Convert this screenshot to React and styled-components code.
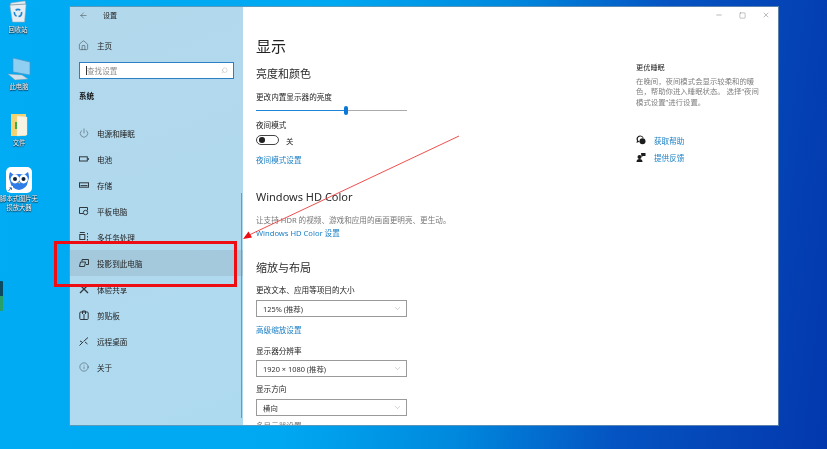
import React from 'react';
import styled, { createGlobalStyle } from 'styled-components';
import { ArrowLeft, ChevronDown, House, Info, Minus, Power, Search, Square, X } from 'lucide-react';

const GlobalStyle = createGlobalStyle`
  html, body { margin: 0; padding: 0; background: #0078d7; }
  body { font-family: "Noto Sans", "Noto Sans CJK SC", sans-serif; }
`;

const Desktop = styled.div`
  position: relative;
  width: 827px;
  height: 449px;
  overflow: hidden;
  background: linear-gradient(97deg, #00acf4 0%, #00a8f1 38%, #0088dd 58%, #0553c2 76%, #0338ad 100%);
`;

const DesktopIcon = styled.div`
  position: absolute;
  left: ${p => p.$x}px;
  top: ${p => p.$y}px;
  width: 38px;
  display: flex;
  flex-direction: column;
  align-items: center;
  filter: blur(0.3px);
`;

const DesktopLabel = styled.span`
  margin-top: ${p => p.$gap}px;
  width: 38px;
  text-align: center;
  font-size: 6.3px;
  line-height: 8.5px;
  color: #fff;
  text-shadow: 0 0 1px #123, 0 1px 1px #123;
`;

const EdgeWidget = styled.div`
  position: absolute;
  left: 0;
  top: 281px;
  width: 3px;
  height: 30px;
  border-radius: 0 1px 1px 0;
  background: linear-gradient(#0b4a63 0 50%, #27a06a 50% 100%);
`;

const Window = styled.div`
  position: absolute;
  left: 70px;
  top: 7px;
  width: 708px;
  height: 418px;
  box-sizing: border-box;
  display: flex;
  background: #fff;
  box-shadow: 0 0 0 1px rgba(120, 150, 170, 0.75);
  overflow: hidden;
  filter: blur(0.3px);
`;

const Sidebar = styled.aside`
  position: relative;
  width: 173px;
  flex: none;
  background: linear-gradient(160deg, #b3d8ec, #aedaf0);
  color: #222;
`;

const TitleRow = styled.div`
  height: 16px;
  display: flex;
  align-items: center;
  padding-left: 9px;
  gap: 15px;
  font-size: 7px;
`;

const HomeRow = styled.div`
  margin-top: 15px;
  height: 15px;
  display: flex;
  align-items: center;
  gap: 8px;
  padding-left: 8px;
  font-size: 7.6px;
`;

const SearchBox = styled.div`
  margin: 9px 0 0 9px;
  width: 155px;
  height: 17px;
  box-sizing: border-box;
  display: flex;
  align-items: center;
  padding: 0 5px 0 6px;
  background: #fff;
  border: 1px solid #2c7fc4;
  color: #8f8f8f;
  font-size: 7.6px;
`;

const Caret = styled.span`
  width: 1px;
  height: 9px;
  margin-right: 0;
  background: #333;
`;

const SearchText = styled.span`
  flex: 1;
`;

const SidebarHeading = styled.div`
  margin: 12px 0 0 9px;
  height: 10px;
  line-height: 10px;
  font-size: 7.5px;
  font-weight: 700;
  color: #111;
`;

const NavList = styled.nav`
  margin-top: 19px;
  display: flex;
  flex-direction: column;
`;

const NavRow = styled.div`
  height: 26px;
  display: flex;
  align-items: center;
  gap: 8px;
  padding-left: 9px;
  font-size: 7.6px;
  background: ${p => (p.$active ? '#a4c9dc' : 'transparent')};
`;

const NavIcon = styled.svg`
  width: 10px;
  height: 10px;
  flex: none;
  fill: none;
  stroke: #2f383d;
  stroke-width: 1;
`;

const SideScroll = styled.div`
  position: absolute;
  right: 1px;
  top: 186px;
  width: 1.5px;
  height: 225px;
  background: #7f97a5;
`;

const Main = styled.main`
  flex: 1;
  min-width: 0;
  display: flex;
  flex-direction: column;
`;

const Controls = styled.div`
  height: 16px;
  flex: none;
  display: flex;
  justify-content: flex-end;
  align-items: center;
  gap: 16px;
  padding-right: 8px;
  color: #333;
`;

const Columns = styled.div`
  flex: 1;
  min-height: 0;
  display: flex;
`;

const Content = styled.section`
  width: 393px;
  flex: none;
  box-sizing: border-box;
  padding: 13px 0 0 13px;
  color: #222;
`;

const PageTitle = styled.h1`
  margin: 0;
  height: 20px;
  line-height: 20px;
  font-size: 15px;
  font-weight: 400;
  color: #222;
`;

const SectionTitle = styled.h2`
  margin: ${p => p.$top}px 0 0;
  height: 14px;
  line-height: 14px;
  font-size: 11px;
  font-weight: 400;
  color: #2b2b2b;
`;

const Label = styled.div`
  margin-top: ${p => p.$top}px;
  height: 10px;
  line-height: 10px;
  font-size: 7.6px;
  white-space: nowrap;
  color: ${p => (p.$muted ? '#777' : '#222')};
`;

const LinkText = styled(Label)`
  color: #1a7fc4;
`;

const Slider = styled.div`
  margin-top: 4px;
  position: relative;
  width: 151px;
  height: 9px;
  display: flex;
  align-items: center;
  &::before {
    content: '';
    width: 100%;
    height: 1.5px;
    background: linear-gradient(to right, #1e84d8 60%, #ababab 60%);
  }
`;

const SliderThumb = styled.span`
  position: absolute;
  left: 88px;
  top: 0;
  width: 4px;
  height: 9px;
  border-radius: 2px;
  background: #0a78d6;
`;

const ToggleRow = styled.div`
  margin-top: 5px;
  height: 10px;
  display: flex;
  align-items: center;
  gap: 7px;
  font-size: 7.4px;
`;

const Toggle = styled.span`
  width: 23px;
  height: 10px;
  box-sizing: border-box;
  border: 1.2px solid #444;
  border-radius: 5px;
  display: flex;
  align-items: center;
  padding-left: 2px;
  &::before {
    content: '';
    width: 5.5px;
    height: 5.5px;
    border-radius: 50%;
    background: #222;
  }
`;

const Select = styled.div`
  margin-top: ${p => p.$top}px;
  width: 151px;
  height: 17px;
  box-sizing: border-box;
  display: flex;
  align-items: center;
  justify-content: space-between;
  padding: 0 4px 0 6px;
  border: 1.2px solid #9a9a9a;
  font-size: 7.4px;
  color: #333;
`;

const Aside = styled.aside`
  flex: 1;
  padding-top: 39px;
`;

const AsideTitle = styled.div`
  height: 10px;
  line-height: 10px;
  font-size: 7.2px;
  color: #222;
`;

const AsideText = styled.p`
  margin: 4px 0 28px;
  font-size: 7.4px;
  line-height: 10.4px;
  color: #808080;
  white-space: nowrap;
`;

const HelpRow = styled.div`
  margin-top: ${p => p.$top}px;
  height: 10px;
  display: flex;
  align-items: center;
  gap: 8px;
  font-size: 7.6px;
  color: #1a7fc4;
`;

const HelpIcon = styled.svg`
  width: 10px;
  height: 10px;
  flex: none;
  fill: #1c1c1c;
`;

const Highlight = styled.div`
  position: absolute;
  left: 54px;
  top: 241px;
  width: 183px;
  height: 46px;
  box-sizing: border-box;
  border: 3px solid #ee0d12;
`;

const Arrow = styled.svg`
  position: absolute;
  left: 0;
  top: 0;
  pointer-events: none;
`;

const navItems = [
  ['电源和睡眠', <Power key="i" size={10} strokeWidth={1.1} color="#2f383d" />],
  ['电池', <NavIcon key="i" viewBox="0 0 10 10"><rect x="0.5" y="2.8" width="7.8" height="4.2" /><path d="M9.3 4v2" /></NavIcon>],
  ['存储', <NavIcon key="i" viewBox="0 0 10 10"><rect x="0.5" y="2.8" width="9" height="4.4" /><path d="M1.5 5.600h7" /></NavIcon>],
  ['平板电脑', <NavIcon key="i" viewBox="0 0 10 10"><path d="M4 7.500H.5v-6h8v3" /><circle cx="6.500" cy="6.500" r="2.200" /></NavIcon>],
  ['多任务处理', <NavIcon key="i" viewBox="0 0 10 10"><path d="M.8.5h5M.8 9.500h5" /><rect x=".8" y="2.500" width="5" height="5" /><path d="M8.500 1v1.500M8.500 4v1.500M8.500 7v1.500" /></NavIcon>],
  ['投影到此电脑', <NavIcon key="i" viewBox="0 0 10 10"><path d="M3 3.500V1.500h6.500v5H7" /><path d="M.5 8.500l1-4.500h5l-1 4.500z" /></NavIcon>, true],
  ['体验共享', <NavIcon key="i" viewBox="0 0 10 10"><path d="M1 1l8 8M9 1L1 9" strokeWidth="1.3" /></NavIcon>],
  ['剪贴板', <NavIcon key="i" viewBox="0 0 10 10"><rect x=".8" y="2" width="8.400" height="7.500" rx="1" /><path d="M3.500 4V1h3v3M5 4v5.500" /></NavIcon>],
  ['远程桌面', <NavIcon key="i" viewBox="0 0 10 10"><path d="M.5 9.500l4-4M5 5l4-3.500M6 6l2.500 2M1 5l2 1" /></NavIcon>],
  ['关于', <Info key="i" size={10} strokeWidth={1.1} color="#2f383d" />],
];

const RecycleBin = () => (
  <svg width="22" height="23" viewBox="0 0 22 23">
    <path d="M4 3l14-2 1 4-1.500 17H5.500L3 6z" fill="#e6eef3" stroke="#9fb2bd" strokeWidth=".6" />
    <path d="M3 5l16-1" stroke="#8ea3ae" />
    <circle cx="11" cy="13" r="3.600" fill="none" stroke="#1d87d6" strokeWidth="1.6" strokeDasharray="5 2" />
  </svg>
);

const ThisPc = () => (
  <svg width="24" height="24" viewBox="0 0 24 24">
    <path d="M6 1l17 4v13l-17-3z" fill="#8fd0f2" stroke="#4c96c6" strokeWidth=".7" />
    <path d="M1 17l14 1 6 4-13 1z" fill="#cfe0ea" stroke="#7d95a5" strokeWidth=".4" />
  </svg>
);

const Folder = () => (
  <svg width="18" height="24" viewBox="0 0 18 24">
    <path d="M1 1h15v22H1z" fill="#f2d36f" />
    <path d="M7 3l10 1v18l-10 1z" fill="#f7f4e4" stroke="#ddd" strokeWidth=".4" />
    <rect x="5" y="9" width="2" height="7" fill="#3dac4c" />
  </svg>
);

const OwlApp = () => (
  <svg width="26" height="26" viewBox="0 0 26 26">
    <rect width="26" height="26" rx="5" fill="#fff" />
    <path d="M4 5l4 3q5-2 10 0l4-3q2 5 0 9q-1 8-9 9q-8-1-9-9q-2-4 0-9z" fill="#2f7de8" />
    <circle cx="9" cy="12" r="4.400" fill="#fff" />
    <circle cx="17.500" cy="12" r="4.400" fill="#fff" />
    <circle cx="9" cy="12" r="2" fill="#10213a" />
    <circle cx="17.500" cy="12" r="2" fill="#10213a" />
    <path d="M12 15l1.300 2 1.300-2z" fill="#f2b93b" />
    <rect x="1" y="19" width="6" height="6" fill="#fff" />
    <path d="M2.500 24l2.500-3M3.500 20.800h2v2" stroke="#1c5fae" strokeWidth=".9" fill="none" />
  </svg>
);

const App = () => (
  <Desktop>
    <GlobalStyle />
    <DesktopIcon $x={-1} $y={0}>
      <RecycleBin />
      <DesktopLabel $gap={3}>回收站</DesktopLabel>
    </DesktopIcon>
    <DesktopIcon $x={0} $y={57}>
      <ThisPc />
      <DesktopLabel $gap={2}>此电脑</DesktopLabel>
    </DesktopIcon>
    <DesktopIcon $x={0} $y={113}>
      <Folder />
      <DesktopLabel $gap={2}>文件</DesktopLabel>
    </DesktopIcon>
    <DesktopIcon $x={0} $y={167}>
      <OwlApp />
      <DesktopLabel $gap={2}>脚本式图片无损放大器</DesktopLabel>
    </DesktopIcon>
    <EdgeWidget />

    <Window>
      <Sidebar>
        <TitleRow>
          <ArrowLeft size={9} strokeWidth={1.2} color="#333" />
          <span>设置</span>
        </TitleRow>
        <HomeRow>
          <House size={11} strokeWidth={1.1} color="#2f383d" />
          主页
        </HomeRow>
        <SearchBox>
          <Caret />
          <SearchText>查找设置</SearchText>
          <Search size={7} strokeWidth={1.2} color="#999" style={{ transform: 'scaleX(-1)' }} />
        </SearchBox>
        <SidebarHeading>系统</SidebarHeading>
        <NavList>
          {navItems.map(([name, icon, active]) => (
            <NavRow key={name} $active={active}>
              {icon}
              {name}
            </NavRow>
          ))}
        </NavList>
        <SideScroll />
      </Sidebar>

      <Main>
        <Controls>
          <Minus size={8} strokeWidth={1} />
          <Square size={7} strokeWidth={1} />
          <X size={8} strokeWidth={1} />
        </Controls>
        <Columns>
          <Content>
            <PageTitle>显示</PageTitle>
            <SectionTitle $top={11}>亮度和颜色</SectionTitle>
            <Label $top={11}>更改内置显示器的亮度</Label>
            <Slider><SliderThumb /></Slider>
            <Label $top={5}>夜间模式</Label>
            <ToggleRow><Toggle />关</ToggleRow>
            <LinkText $top={10}>夜间模式设置</LinkText>
            <SectionTitle $top={25}>Windows HD Color</SectionTitle>
            <Label $top={11} $muted>让支持 HDR 的视频、游戏和应用的画面更明亮、更生动。</Label>
            <LinkText $top={3}>Windows HD Color 设置</LinkText>
            <SectionTitle $top={23}>缩放与布局</SectionTitle>
            <Label $top={10}>更改文本、应用等项目的大小</Label>
            <Select $top={5}>125% (推荐)<ChevronDown size={9} strokeWidth={0.9} color="#777" /></Select>
            <LinkText $top={8}>高级缩放设置</LinkText>
            <Label $top={11}>显示器分辨率</Label>
            <Select $top={4}>1920 × 1080 (推荐)<ChevronDown size={9} strokeWidth={0.9} color="#777" /></Select>
            <Label $top={7}>显示方向</Label>
            <Select $top={5}>横向<ChevronDown size={9} strokeWidth={0.9} color="#777" /></Select>
            <Label $top={5} $muted>多显示器设置</Label>
          </Content>
          <Aside>
            <AsideTitle>更优睡眠</AsideTitle>
            <AsideText>
              在晚间，夜间模式会显示较柔和的暖<br />
              色，帮助你进入睡眠状态。 选择“夜间<br />
              模式设置”进行设置。
            </AsideText>
            <HelpRow $top={0}>
              <HelpIcon viewBox="0 0 10 10">
                <path d="M4 .5a3.500 3.500 0 0 0-3 5.200L.5 8l2-1a3 3 0 0 0 1 .3V6.500A2.600 2.600 0 1 1 6.800 3h.9A3.700 3.700 0 0 0 4 .5z" />
                <circle cx="6.500" cy="6.200" r="3" />
              </HelpIcon>
              获取帮助
            </HelpRow>
            <HelpRow $top={7}>
              <HelpIcon viewBox="0 0 10 10">
                <circle cx="3.500" cy="5" r="2" />
                <path d="M.5 10q0-3 3-3t3 3zM5 1h4.500v3H7L5.500 5z" />
              </HelpIcon>
              提供反馈
            </HelpRow>
          </Aside>
        </Columns>
      </Main>
    </Window>

    <Highlight />
    <Arrow width="827" height="449" viewBox="0 0 827 449">
      <path d="M459 136L247 236" stroke="#ee3a3a" strokeWidth="0.9" fill="none" />
      <path d="M243 239l9-1.500-3.500-6z" fill="#ee0d12" />
    </Arrow>
  </Desktop>
);

export default App;
